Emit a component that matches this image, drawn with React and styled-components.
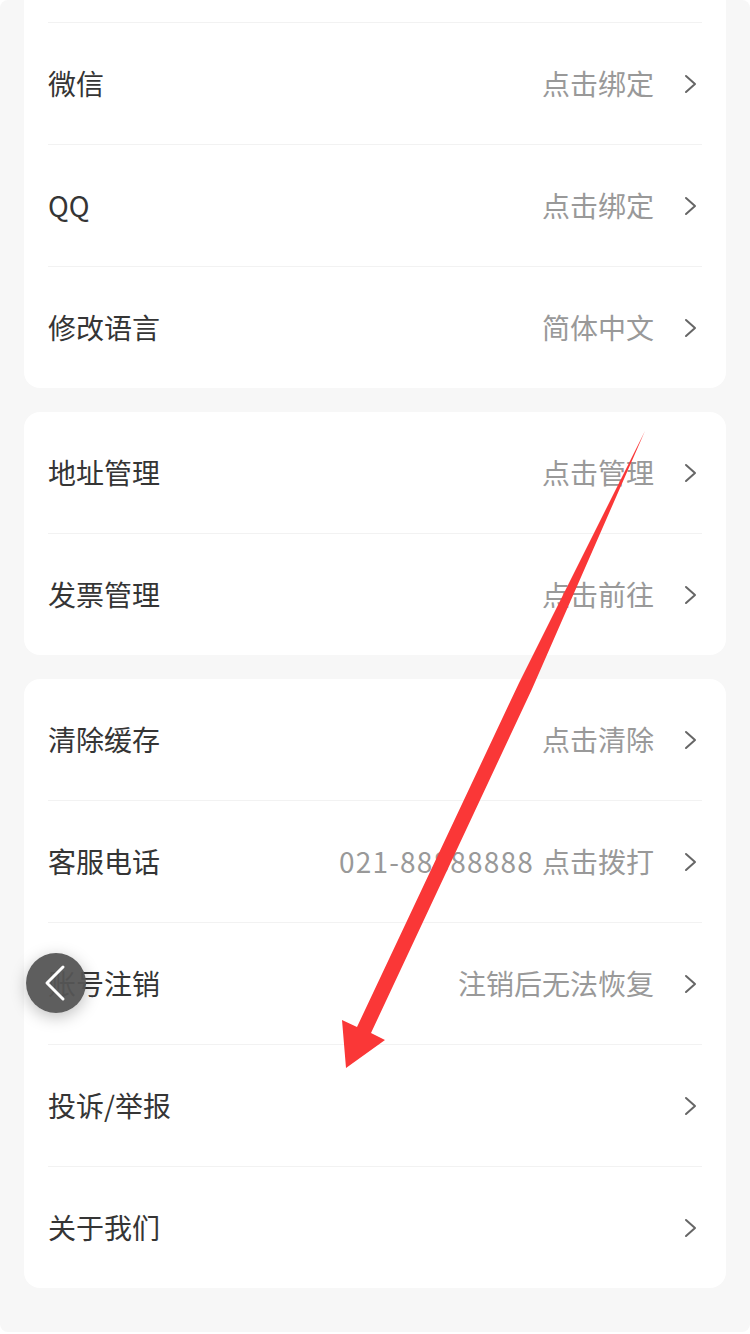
import React from "react";
import styled, { createGlobalStyle } from "styled-components";

const GlobalStyle = createGlobalStyle`
    html, body {
        margin: 0;
        padding: 0;
        background: #fff;
    }
    body {
        font-family: "Noto Sans CJK SC", "Noto Sans", sans-serif;
    }
`;

// 第一组最上面一行已经滚出屏幕，只留一个空行占位
const groups = [
    [
        { label: "", value: "", hidden: true },
        { label: "微信", value: "点击绑定" },
        { label: "QQ", value: "点击绑定" },
        { label: "修改语言", value: "简体中文" },
    ],
    [
        { label: "地址管理", value: "点击管理" },
        { label: "发票管理", value: "点击前往" },
    ],
    [
        { label: "清除缓存", value: "点击清除" },
        { label: "客服电话", phone: "021-88888888", value: "点击拨打" },
        { label: "账号注销", value: "注销后无法恢复" },
        { label: "投诉/举报", value: "" },
        { label: "关于我们", value: "" },
    ],
];

const Chevron = () => (
    <svg width="14" height="24" viewBox="0 0 14 24">
        <polyline
            points="2,4 11,12 2,20"
            fill="none"
            stroke="#666"
            strokeWidth="2"
            strokeLinecap="round"
            strokeLinejoin="round"
        />
    </svg>
);

const App = () => {
    return (
        <>
            <GlobalStyle />
            <Frame>
                <Scroll>
                    {groups.map((items, gi) => (
                        <Card key={gi}>
                            {items.map((item, i) => (
                                <Row key={i} last={i === items.length - 1}>
                                    {!item.hidden && (
                                        <>
                                            <Label>{item.label}</Label>
                                            <Right>
                                                {(item.value || item.phone) && (
                                                    <Value>
                                                        {item.phone && <Phone>{item.phone}</Phone>}
                                                        {item.value}
                                                    </Value>
                                                )}
                                                <Chevron />
                                            </Right>
                                        </>
                                    )}
                                </Row>
                            ))}
                        </Card>
                    ))}
                </Scroll>

                <BackButton>
                    <svg width="60" height="60" viewBox="0 0 60 60">
                        <polyline
                            points="37,14 21,30 37,46"
                            fill="none"
                            stroke="#fff"
                            strokeWidth="3"
                            strokeLinecap="round"
                            strokeLinejoin="round"
                        />
                    </svg>
                </BackButton>

                <ArrowMark width="750" height="1334" viewBox="0 0 750 1334">
                    <polygon
                        points="645,431 532,689 371,1033 385,1040 346,1068 342,1020 357,1027 519,683"
                        fill="#fa3737"
                    />
                </ArrowMark>
            </Frame>
        </>
    );
};

const Frame = styled.div`
    position: relative;
    width: 750px;
    height: 1332px;
    background-color: #f7f7f7;
    border-radius: 8px;
    overflow: hidden;
`;

const Scroll = styled.div`
    display: flex;
    flex-direction: column;
    gap: 24px;
    margin-top: -99px;
    padding: 0 24px 46px;
`;

const Card = styled.div`
    background-color: #fff;
    border-radius: 16px;
    padding: 0 24px;
`;

const Row = styled.div`
    display: flex;
    justify-content: space-between;
    align-items: center;
    height: 121px;
    border-bottom: ${(props) => (props.last ? "none" : "1px solid #f2f2f2")};
`;

const Label = styled.span`
    font-size: 28px;
    color: #353535;
    margin-top: -2px;
`;

const Right = styled.div`
    display: flex;
    align-items: center;
    gap: 30px;
    padding-right: 4px;
`;

const Value = styled.span`
    font-size: 28px;
    color: #999;
    margin-top: -2px;
`;

const Phone = styled.span`
    letter-spacing: 1.2px;
    margin-right: 8px;
`;

const BackButton = styled.div`
    position: absolute;
    left: 26px;
    top: 953px;
    width: 60px;
    height: 60px;
    border-radius: 50%;
    background-color: rgba(85, 85, 85, 0.95);
    box-shadow: 0 4px 16px rgba(0, 0, 0, 0.25);
    display: flex;
    align-items: center;
    justify-content: center;
`;

const ArrowMark = styled.svg`
    position: absolute;
    left: 0;
    top: 0;
    pointer-events: none;
`;

export default App;
